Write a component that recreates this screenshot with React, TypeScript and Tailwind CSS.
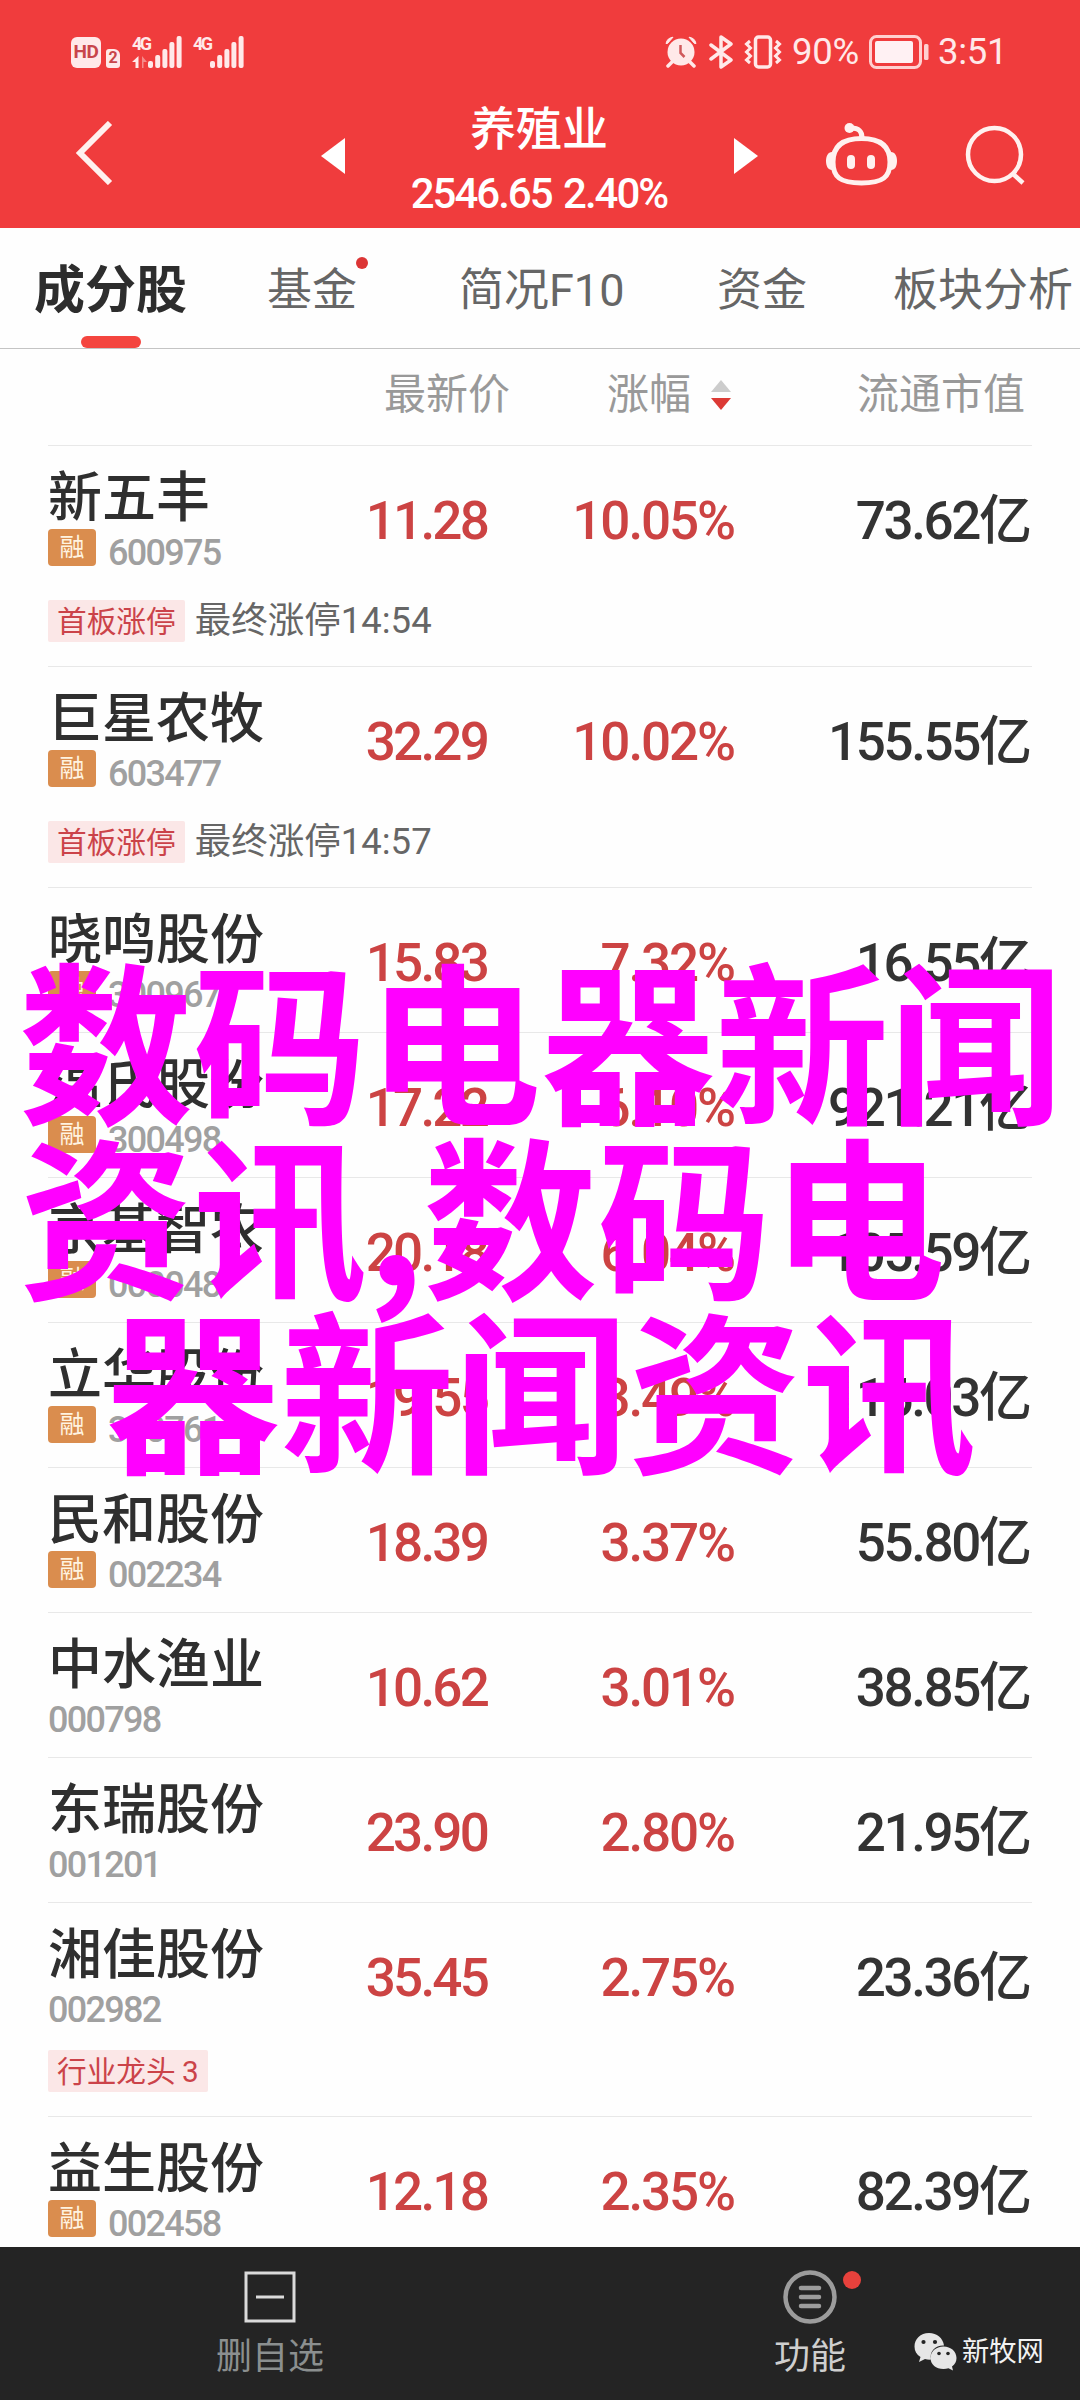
// src/App.tsx
type Stock = {
    name: string;
    code: string;
    price: string;
    change: string;
    cap: string;
    margin?: boolean;
    tag?: string;
    note?: string;
};

const stocks: Stock[] = [
    { name: '新五丰', code: '600975', price: '11.28', change: '10.05%', cap: '73.62', margin: true, tag: '首板涨停', note: '最终涨停14:54' },
    { name: '巨星农牧', code: '603477', price: '32.29', change: '10.02%', cap: '155.55', margin: true, tag: '首板涨停', note: '最终涨停14:57' },
    { name: '晓鸣股份', code: '300967', price: '15.83', change: '7.32%', cap: '16.55', margin: true },
    { name: '温氏股份', code: '300498', price: '17.22', change: '6.10%', cap: '921.21', margin: true },
    { name: '京基智农', code: '000048', price: '20.18', change: '6.04%', cap: '105.59', margin: true },
    { name: '立华股份', code: '300761', price: '19.55', change: '3.49%', cap: '16.03', margin: true },
    { name: '民和股份', code: '002234', price: '18.39', change: '3.37%', cap: '55.80', margin: true },
    { name: '中水渔业', code: '000798', price: '10.62', change: '3.01%', cap: '38.85' },
    { name: '东瑞股份', code: '001201', price: '23.90', change: '2.80%', cap: '21.95' },
    { name: '湘佳股份', code: '002982', price: '35.45', change: '2.75%', cap: '23.36', tag: '行业龙头 3' },
    { name: '益生股份', code: '002458', price: '12.18', change: '2.35%', cap: '82.39', margin: true },
];

function Signal() {
    return (
        <svg width="34" height="32" viewBox="0 0 34 32" fill="#ffe9e9">
            <rect x="0" y="25" width="5" height="7" rx="2" />
            <rect x="7.2" y="19" width="5" height="13" rx="2" />
            <rect x="14.4" y="13" width="5" height="19" rx="2" />
            <rect x="21.4" y="6" width="5" height="26" rx="2" />
            <rect x="28.6" y="0" width="5" height="32" rx="2" />
        </svg>
    );
}

function StatusBar() {
    return (
        <div className="flex h-[104px] items-center pl-[71px] pr-[74px] text-[#ffe9e9]">
            <div className="flex h-[31px] w-[30px] items-center justify-center rounded-[6px] bg-[#ffe9e9] text-[19px] font-bold tracking-[-0.5px] text-[#c8454a]">HD</div>
            <div className="ml-[5px] mt-[12px] flex h-[19px] w-[14px] items-center justify-center rounded-[3px] rounded-tr-[6px] bg-[#ffe9e9] text-[16px] font-bold text-[#c8454a]">2</div>
            <div className="ml-[12px] flex h-[32px] w-[16px] flex-col justify-between">
                <span className="text-[18px] font-bold leading-[16px] tracking-[-2.5px]">4G</span>
                <svg width="16" height="12" viewBox="0 0 16 12">
                    <path d="M6.5 0v12H3.500V6H0z" fill="#ffe9e9" />
                    <path d="M10 0v12h1.500V6H15z" fill="#f58a8a" />
                </svg>
            </div>
            <Signal />
            <div className="ml-[11px] flex h-[32px] w-[17px] flex-col">
                <span className="text-[18px] font-bold leading-[16px] tracking-[-2.5px]">4G</span>
            </div>
            <Signal />
            <div className="ml-auto flex items-center">
                <svg width="32" height="32" viewBox="0 0 32 32">
                    <circle cx="16" cy="16" r="13.500" fill="#ffe9e9" />
                    <path d="M1 7.500C2 3.500 4 1.800 8 1.200L2.500 7.500zM31 7.500c-1-4-3-5.700-7-6.300l5.500 6.300z" fill="#ffe9e9" stroke="#ffe9e9" strokeLinejoin="round" />
                    <path d="M7 26l-4 4M25 26l4 4" stroke="#ffe9e9" strokeWidth="3.500" strokeLinecap="round" />
                    <path d="M15.500 9v8l4 4" stroke="#d0595b" strokeWidth="2.500" fill="none" />
                </svg>
                <svg className="ml-[12px]" width="24" height="34" viewBox="0 0 24 34" fill="none" stroke="#ffe9e9" strokeWidth="3.500" strokeLinejoin="round" strokeLinecap="round">
                    <path d="M2 10l20 15-10 7V2l10 7L2 24" />
                </svg>
                <svg className="ml-[11px]" width="39" height="34" viewBox="0 0 39 34" fill="none" stroke="#ffe9e9" strokeWidth="3.500">
                    <rect x="11.500" y="2" width="15" height="30" rx="3" />
                    <path d="M6 6L2.500 9l4 4-4 4 4 4-4 4L6 28M32 6l3.500 3-4 4 4 4-4 4 4 4-3.500 3" strokeWidth="3" />
                </svg>
                <span className="ml-[9px] w-[72px] text-[36.5px] leading-[40px] tracking-[-0.3px]">90%</span>
                <svg className="ml-[5px]" width="61" height="34" viewBox="0 0 61 34">
                    <rect x="1.500" y="1.500" width="50" height="31" rx="6" fill="none" stroke="#ffd0d0" strokeWidth="3" />
                    <rect x="6" y="6" width="38" height="22" rx="2" fill="#fff1f3" />
                    <rect x="55" y="9" width="4.500" height="16" rx="1.500" fill="#ffd0d0" />
                </svg>
                <span className="ml-[8px] w-[68px] text-[36.5px] leading-[40px] tracking-[-0.3px]">3:51</span>
            </div>
        </div>
    );
}

function TitleBar() {
    return (
        <div className="flex h-[124px] items-start pl-[75px]">
            <svg className="mt-[17px]" width="38" height="64" viewBox="0 0 38 64" fill="none" stroke="#fff1ef" strokeWidth="6">
                <path d="M35 2L5 32l30 30" />
            </svg>
            <svg className="ml-[208px] mt-[34px]" width="24" height="36" viewBox="0 0 24 36" fill="#fff">
                <path d="M24 0v36L0 18z" />
            </svg>
            <div className="ml-[54px] flex w-[280px] flex-col items-center text-white">
                <div className="h-[50px] text-[46px] font-medium leading-[50px]">养殖业</div>
                <div className="mt-[16px] whitespace-nowrap text-[42px] font-medium leading-[48px] tracking-[-2px] [word-spacing:3px]">2546.65 2.40%</div>
            </div>
            <svg className="ml-[55px] mt-[34px]" width="24" height="36" viewBox="0 0 24 36" fill="#fff">
                <path d="M0 0v36l24-18z" />
            </svg>
            <svg className="ml-[68px] mt-[18px]" width="71" height="66" viewBox="0 0 71 66" fill="none" stroke="#fff1ef" strokeWidth="5">
                <path d="M35.500 16.500C16 16.500 7 25 7 40c0 15 7 21 28.500 21S64 55 64 40c0-15-9-23.500-28.500-23.500z" />
                <path d="M36 16c0-7-3-10-11-10" />
                <circle cx="23.500" cy="6" r="5" fill="#fff1ef" stroke="none" />
                <path d="M6 30c-4 0-6 4-6 9s2 9 6 9zM65 30c4 0 6 4 6 9s-2 9-6 9z" fill="#fff1ef" stroke="none" />
                <path d="M25 37v6M45 37v6" strokeWidth="8" strokeLinecap="round" />
            </svg>
            <svg className="ml-[68px] mt-[21px]" width="62" height="62" viewBox="0 0 62 62" fill="none" stroke="#fff1ef" strokeWidth="4.500">
                <circle cx="29.500" cy="29.500" r="26.500" />
                <path d="M47 48l11 10" />
            </svg>
        </div>
    );
}

function Tabs() {
    return (
        <div className="flex h-[121px] items-start border-b border-[#c4c4c4] pt-[33px] text-[45px] leading-[60px] text-[#666]">
            <div className="ml-[34px] flex w-[153px] flex-col items-center">
                <span className="text-[51px] font-bold text-[#2d2d2d]">成分股</span>
                <span className="mt-[15px] h-[12px] w-[60px] rounded-full bg-[#f4453f]"></span>
            </div>
            <div className="relative ml-[80px] w-[90px]">
                基金
                <span className="absolute left-[89px] top-[-4px] h-[12px] w-[12px] rounded-full bg-[#dc3535]"></span>
            </div>
            <div className="ml-[102px] w-[169px] whitespace-nowrap">简况F10</div>
            <div className="ml-[89px] w-[90px]">资金</div>
            <div className="ml-[86px] w-[184px] whitespace-nowrap">板块分析</div>
        </div>
    );
}

function TableHead() {
    return (
        <div className="flex h-[96px] items-center pb-[4px] text-[42px] leading-[60px] text-[#999]">
            <span className="ml-[384px] w-[126px]">最新价</span>
            <span className="ml-[97px] w-[84px]">涨幅</span>
            <svg className="ml-[20px]" width="20" height="30" viewBox="0 0 20 30">
                <path d="M10 0l10 12H0z" fill="#ccc" />
                <path d="M0 18h20L10 30z" fill="#dc3a35" />
            </svg>
            <span className="ml-[126px] w-[168px]">流通市值</span>
        </div>
    );
}

function StockRow({ stock }: { stock: Stock }) {
    return (
        <div className="ml-[48px] w-[984px] shrink-0 border-t border-[#e8e8e8]">
            <div className="flex h-[144px]">
                <div className="w-[240px] pt-[23px]">
                    <div className="whitespace-nowrap text-[54px] font-medium leading-[60px] text-[#2f2f2f]">{stock.name}</div>
                    <div className="flex h-[37px] items-center">
                        {stock.margin && (
                            <span className="mr-[12px] flex h-[37px] w-[48px] items-center justify-center rounded-[4px] bg-[#da8d4e] text-[25px] text-[#fff3e0]">融</span>
                        )}
                        <span className="mt-[11px] text-[36px] font-medium leading-[36px] tracking-[-1.7px] text-[#a0a0a0]">{stock.code}</span>
                    </div>
                </div>
                <div className="w-[199px] pt-[45px] text-right text-[53px] font-medium leading-[60px] tracking-[-2.8px] text-[#cc4343]">{stock.price}</div>
                <div className="w-[247px] pt-[45px] text-right text-[53px] font-medium leading-[60px] tracking-[-2.1px] text-[#cc4343]">{stock.change}</div>
                <div className="flex w-[298px] justify-end pt-[45px] text-[53px] font-medium leading-[60px] text-[#333]">
                    <span className="tracking-[-2.4px]">{stock.cap}</span>
                    <span>亿</span>
                </div>
            </div>
            {stock.tag && (
                <div className={stock.note ? 'flex h-[76px] items-start pt-[10px]' : 'flex h-[69px] items-start pt-[3px]'}>
                    <span className="h-[42px] rounded-[2px] bg-[#fbe7e7] px-[9px] text-[29.7px] leading-[43px] text-[#cb4349] [word-spacing:-1px]">{stock.tag}</span>
                    {stock.note && <span className="ml-[10px] text-[36.5px] leading-[41px] text-[#666]">{stock.note}</span>}
                </div>
            )}
        </div>
    );
}

function BottomBar() {
    return (
        <div className="relative flex h-[153px] bg-[#242424] text-[36px] leading-[44px]">
            <div className="flex w-1/2 flex-col items-center pt-[24px]">
                <svg width="52" height="52" viewBox="0 0 52 52" fill="none" stroke="#dadada" strokeWidth="3">
                    <path d="M2 2h48v48H2zM12 26h28" />
                </svg>
                <span className="mt-[12px] text-[#8b8f8f]">删自选</span>
            </div>
            <div className="flex w-1/2 flex-col items-center pt-[23px]">
                <div className="relative">
                    <svg width="54" height="54" viewBox="0 0 54 54" fill="none" stroke="#9c9c9c">
                        <circle cx="27" cy="27" r="24.500" strokeWidth="4.500" />
                        <path d="M18 18h18M18 27h18M18 36h18" strokeWidth="4.500" strokeLinecap="round" />
                    </svg>
                    <span className="absolute left-[60px] top-[1px] h-[18px] w-[18px] rounded-full bg-[#e8413c]"></span>
                </div>
                <span className="mt-[11px] text-[#cfcfcf]">功能</span>
            </div>
            {/* account watermark */}
            <div className="absolute left-[914px] top-[82px] flex items-center">
                <svg width="43" height="40" viewBox="0 0 43 40">
                    <path d="M15 2C6.500 2 .5 8 .5 15.500c0 4.500 2 8 6 10.500L5 31l6-3c2 .6 4 .8 6 .6C15 20 22 14 30 14.500 29 7 23 2 15 2z" fill="#e6e6e6" />
                    <path d="M29.500 15.500c-7.500 0-13 5-13 11.500s5.500 11 13 11c1.800 0 3.300-.3 5-.8l4.500 2.300-1-4c3-2 4.500-5 4.500-8.500 0-6.500-5.500-11.500-13-11.500z" fill="#e6e6e6" />
                    <g fill="#242424">
                        <circle cx="9.500" cy="11" r="2.100" />
                        <circle cx="21" cy="11" r="2.100" />
                        <circle cx="25" cy="22.500" r="1.800" />
                        <circle cx="34" cy="22.500" r="1.800" />
                    </g>
                </svg>
                <span className="ml-[5px] mt-[3px] whitespace-nowrap text-[27.3px] leading-[40px] text-[#f2f2f2]">新牧网</span>
            </div>
        </div>
    );
}

function App() {
    return (
        <div className="relative flex h-[2400px] w-[1080px] flex-col overflow-hidden bg-[#fefefe] font-[Roboto,'Noto_Sans_CJK_SC',sans-serif]">
            <div className="bg-[#f03c3d]">
                <StatusBar />
                <TitleBar />
            </div>
            <Tabs />
            <TableHead />
            <div className="flex h-[1802px] flex-col overflow-hidden">
                {stocks.map((stock) => (
                    <StockRow key={stock.code} stock={stock} />
                ))}
            </div>
            <BottomBar />

            {/* headline laid over the list */}
            <div className="absolute left-[19px] top-[948px] whitespace-nowrap font-['Noto_Sans_CJK_SC',sans-serif] text-[174px] font-bold leading-[174.500px] text-[#ff00ff]">
                <div>数码电器新闻</div>
                <div>资讯,数码电</div>
                <div className="pl-[87px]">器新闻资讯</div>
            </div>
        </div>
    );
}

export default App;
